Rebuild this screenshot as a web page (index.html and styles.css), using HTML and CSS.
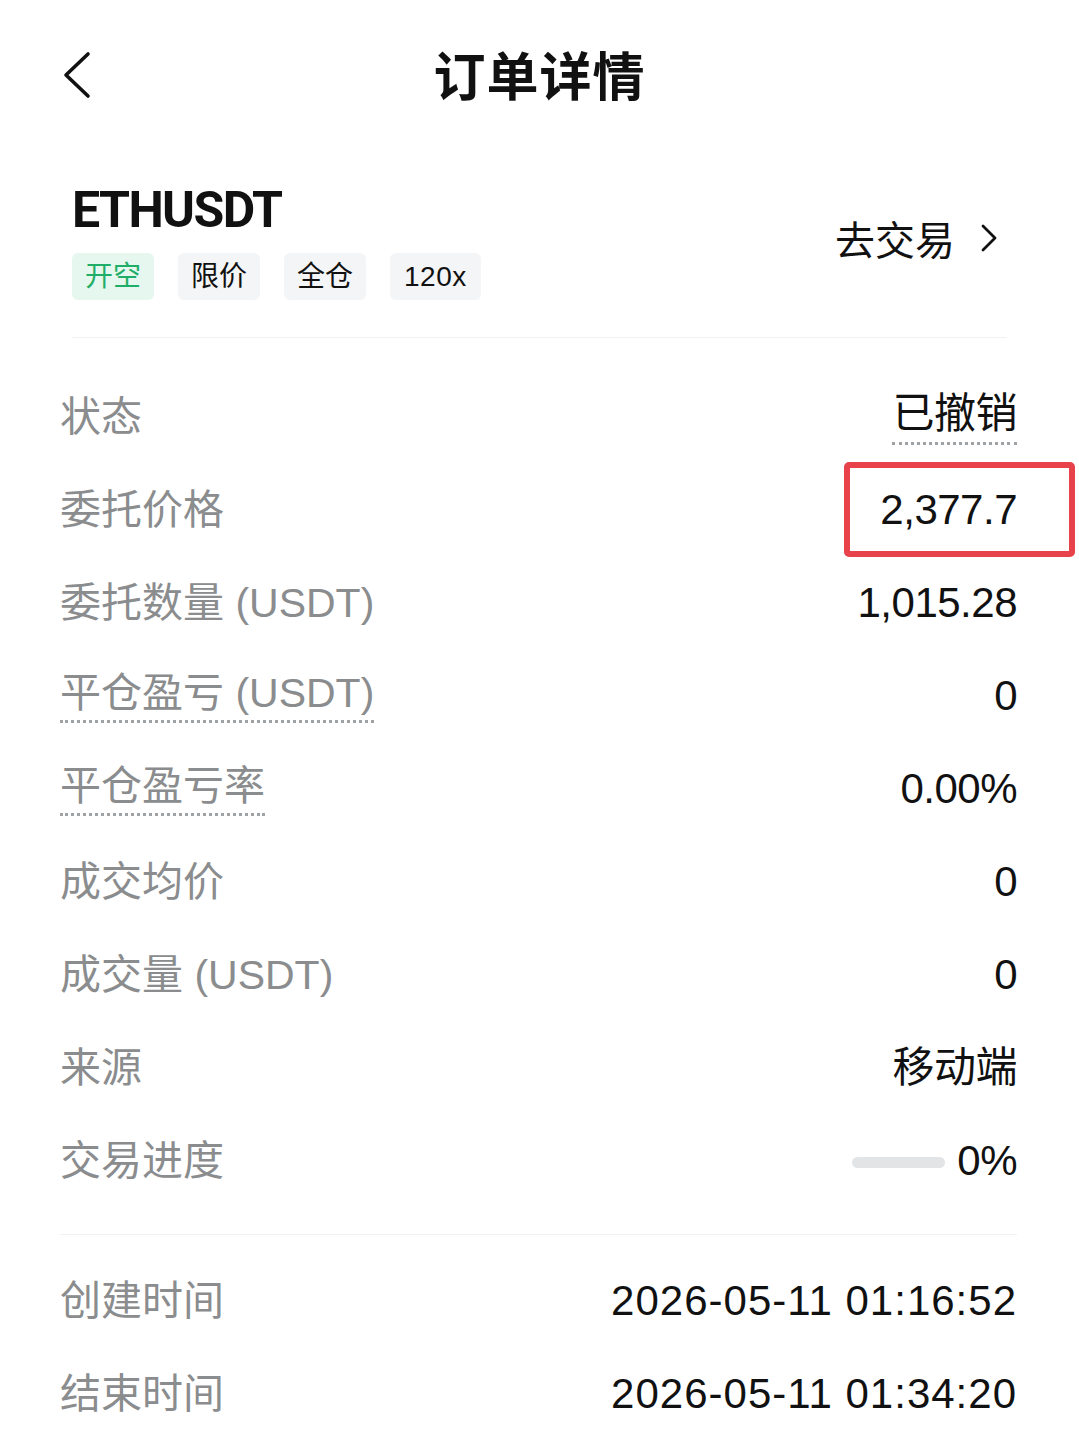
FILE: index.html
```html
<!DOCTYPE html>
<html lang="zh-CN">
<head>
  <meta charset="UTF-8"/>
  <meta name="viewport" content="width=device-width, initial-scale=1.0"/>
  <title>订单详情</title>
  <link rel="stylesheet" href="styles.css">
</head>
<body>
  <div class="nav">
    <a class="back" href="#">
      <svg width="40" height="56" viewBox="0 0 40 56"><polyline points="30,6 8,27 30,48" fill="none" stroke="#111" stroke-width="3.6" stroke-linecap="round" stroke-linejoin="round"/></svg>
    </a>
    <h1>订单详情</h1>
  </div>

  <div class="info">
    <div class="sym">
      <div class="name">ETHUSDT</div>
      <div class="tags">
        <span class="tag green">开空</span>
        <span class="tag">限价</span>
        <span class="tag">全仓</span>
        <span class="tag lev">120x</span>
      </div>
    </div>
    <a class="trade" href="#">去交易
      <svg width="20" height="30" viewBox="0 0 20 30"><polyline points="4,3 16,15 4,27" fill="none" stroke="#111" stroke-width="2.8" stroke-linecap="round" stroke-linejoin="round"/></svg>
    </a>
  </div>

  <div class="rows">
    <div class="row"><span class="lbl">状态</span><span class="val dotted">已撤销</span></div>
    <div class="row"><span class="lbl">委托价格</span><span class="val marked">2,377.7<i class="mark"></i></span></div>
    <div class="row"><span class="lbl">委托数量 (USDT)</span><span class="val">1,015.28</span></div>
    <div class="row"><span class="lbl dotted">平仓盈亏 (USDT)</span><span class="val">0</span></div>
    <div class="row"><span class="lbl dotted">平仓盈亏率</span><span class="val">0.00%</span></div>
    <div class="row"><span class="lbl">成交均价</span><span class="val">0</span></div>
    <div class="row"><span class="lbl">成交量 (USDT)</span><span class="val">0</span></div>
    <div class="row"><span class="lbl">来源</span><span class="val">移动端</span></div>
    <div class="row"><span class="lbl">交易进度</span><span class="val prog"><span class="bar"></span>0%</span></div>
  </div>

  <div class="rows times">
    <div class="row"><span class="lbl">创建时间</span><span class="val">2026-05-11 01:16:52</span></div>
    <div class="row"><span class="lbl">结束时间</span><span class="val">2026-05-11 01:34:20</span></div>
  </div>
</body>
</html>
```

FILE: styles.css
```css
body { margin:0; background:#fff; color:#111; font-family:"Liberation Sans", "Noto Sans CJK SC", sans-serif; }
a { color:inherit; text-decoration:none; }

.nav { position:relative; height:152px; display:flex; align-items:center; justify-content:center; }
.back { position:absolute; left:58px; top:48px; }
.nav h1 { margin:-6px 0 0; font-size:52px; font-weight:bold; letter-spacing:1px; }

.info { display:flex; justify-content:space-between; align-items:center; margin:0 72px; padding:28px 0 37px; border-bottom:1px solid #f0f1f2; }
.name { font-family:Roboto, "Liberation Sans", sans-serif; font-weight:bold; font-size:50px; line-height:60px; letter-spacing:-1.6px; }
.tags { display:flex; gap:24px; margin-top:13px; }
.tag { display:inline-block; height:47px; line-height:47px; padding:0 13px; font-size:28px; background:#f4f5f6; border-radius:6px; color:#111; }
.tag.green { background:#e5f7ee; color:#1fae68; }
.tag.lev { padding:0 14px; letter-spacing:0.5px; }
.trade { display:flex; align-items:center; gap:24px; font-size:40px; margin-top:-4px; margin-right:8px; }

.rows { margin:0 62px 0 60px; padding:33px 0 26px; border-bottom:1px solid #f0f1f2; }
.row { height:93px; display:flex; justify-content:space-between; align-items:center; }
.lbl { font-size:41px; color:#8a8c8e; line-height:1.15; }
.val { font-size:42px; color:#111; line-height:1.15; letter-spacing:-0.5px; }
.dotted { padding-bottom:3px; border-bottom:3px dotted #a0a3a6; }
.marked { position:relative; }
.mark { position:absolute; left:-36px; right:-58px; top:-24px; bottom:-22px; border:6px solid #e8434b; border-radius:5px; }
.prog { display:flex; align-items:center; }
.bar { display:inline-block; width:93px; height:11px; background:#e2e4e5; border-radius:6px; margin-right:12px; margin-top:2px; }

.times { border-bottom:none; padding-top:20px; }
.times .val { letter-spacing:1px; }
```
